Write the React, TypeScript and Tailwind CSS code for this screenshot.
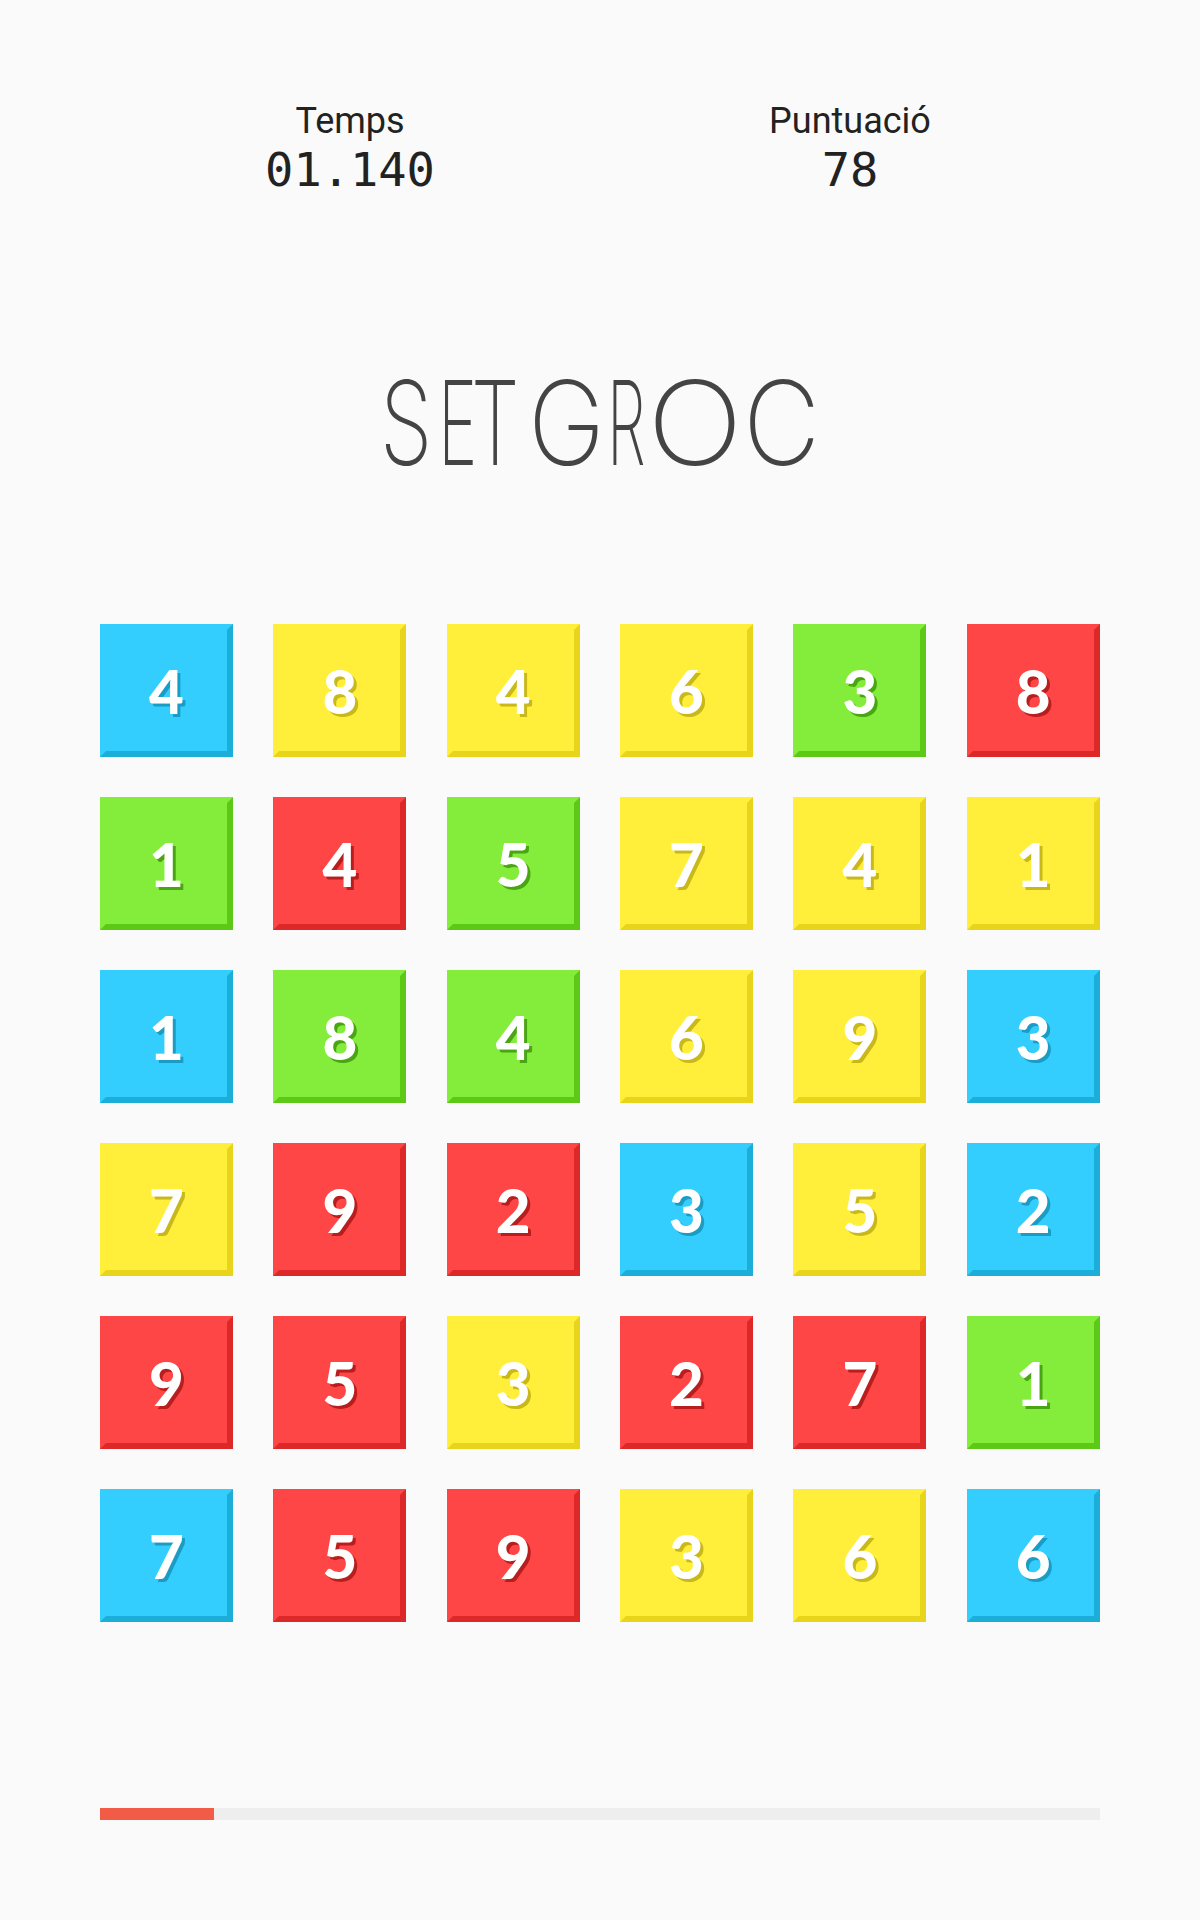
import React from "react";

type TileColor = "blue" | "yellow" | "green" | "red";

const tileStyles: Record<TileColor, string> = {
  blue: "bg-[#33cdfe] border-t-[#33cdfe] border-l-[#33cdfe] border-r-[#1aaed8] border-b-[#1aaed8] [text-shadow:3px_3px_0_#1a9cc4]",
  yellow: "bg-[#ffef3a] border-t-[#ffef3a] border-l-[#ffef3a] border-r-[#e8d41a] border-b-[#e8d41a] [text-shadow:3px_3px_0_#c9b81a]",
  green: "bg-[#84ec3b] border-t-[#84ec3b] border-l-[#84ec3b] border-r-[#5cc916] border-b-[#5cc916] [text-shadow:3px_3px_0_#4aa512]",
  red: "bg-[#ff4646] border-t-[#ff4646] border-l-[#ff4646] border-r-[#dc2828] border-b-[#dc2828] [text-shadow:3px_3px_0_#b81e1e]",
};

const B: TileColor = "blue";
const Y: TileColor = "yellow";
const G: TileColor = "green";
const R: TileColor = "red";

const board: [number, TileColor][][] = [
  [[4, B], [8, Y], [4, Y], [6, Y], [3, G], [8, R]],
  [[1, G], [4, R], [5, G], [7, Y], [4, Y], [1, Y]],
  [[1, B], [8, G], [4, G], [6, Y], [9, Y], [3, B]],
  [[7, Y], [9, R], [2, R], [3, B], [5, Y], [2, B]],
  [[9, R], [5, R], [3, Y], [2, R], [7, R], [1, G]],
  [[7, B], [5, R], [9, R], [3, Y], [6, Y], [6, B]],
];

const Tile = ({ value, color }: { value: number; color: TileColor }) => (
  <div
    className={`flex h-[133px] w-[133px] items-center justify-center border-[6px] font-['Lato','Liberation_Sans',sans-serif] text-[60px] font-black text-white ${tileStyles[color]}`}
  >
    <span className="leading-none">{value}</span>
  </div>
);

// thin geometric title: each letter squeezed to the width it has in the logo
const Title = () => (
  <h1 className="mt-[170px] flex justify-center font-['Inter',sans-serif] text-[117px] font-extralight leading-[120px] text-[#444]">
    <span className="-ml-[4px] inline-block w-[58px]">
      <span className="-ml-[5px] inline-block origin-left scale-x-[0.72]">S</span>
    </span>
    <span className="inline-block w-[29px]">
      <span className="-ml-[5px] inline-block origin-left scale-x-[0.57]">E</span>
    </span>
    <span className="inline-block w-[61px]">
      <span className="-ml-[1px] inline-block origin-left scale-x-[0.66]">T</span>
    </span>
    <span className="w-0 overflow-hidden"> </span>
    <span className="inline-block w-[79px]">
      <span className="-ml-[5px] inline-block origin-left scale-x-[0.89]">G</span>
    </span>
    <span className="inline-block w-[41px]">
      <span className="-ml-[5px] inline-block origin-left scale-x-[0.53]">R</span>
    </span>
    <span className="inline-block w-[96px]">
      <span className="-ml-[6px] inline-block origin-left scale-x-[1.09]">O</span>
    </span>
    <span className="inline-block w-[62px]">
      <span className="-ml-[6px] inline-block origin-left scale-x-[0.91]">C</span>
    </span>
  </h1>
);

export default function App() {
  return (
    <div className="min-h-[1920px] w-[1200px] bg-[#fafafa] px-[100px] text-[#222]">
      <div className="grid grid-cols-2 pt-[100px]">
        <div className="flex flex-col items-center">
          <p className="font-['Roboto',sans-serif] text-[36px] leading-[42px]">Temps</p>
          <p className="mt-[5px] font-['DejaVu_Sans_Mono',monospace] text-[47px] leading-[46px]">01.140</p>
        </div>
        <div className="flex flex-col items-center">
          <p className="font-['Roboto',sans-serif] text-[36px] leading-[42px]">Puntuació</p>
          <p className="mt-[5px] font-['DejaVu_Sans_Mono',monospace] text-[47px] leading-[46px]">78</p>
        </div>
      </div>

      <Title />

      <div className="mt-[141px] grid grid-cols-6 gap-[40px]">
        {board.flat().map(([value, color], i) => (
          <Tile key={i} value={value} color={color} />
        ))}
      </div>

      <div className="mt-[186px] h-[12px] w-full bg-[#eeeeee]">
        <div className="h-full w-[114px] bg-[#f25c47]" />
      </div>
    </div>
  );
}
